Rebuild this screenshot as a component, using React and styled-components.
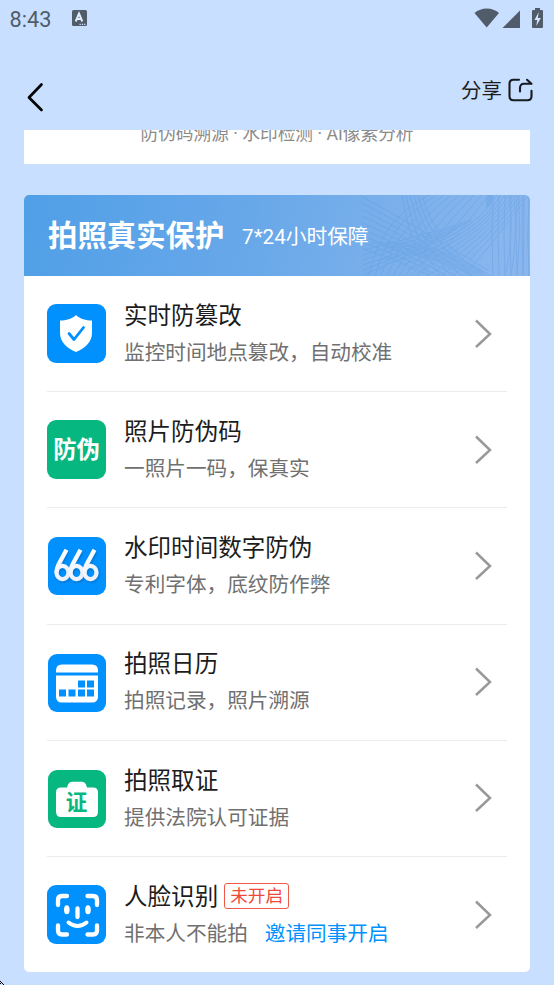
import React from 'react';
import styled, { createGlobalStyle } from 'styled-components';

const GlobalStyle = createGlobalStyle`
  * { box-sizing: border-box; }
  body { margin: 0; background: #c9dfff; }
`;

const Screen = styled.div`
  position: relative;
  display: flex;
  flex-direction: column;
  width: 554px;
  height: 985px;
  overflow: hidden;
  background: #c9dfff;
  font-family: Roboto, 'Noto Sans CJK SC', sans-serif;
  color: #1c1c1c;
  white-space: nowrap;
`;

const StatusBar = styled.header`
  display: flex;
  justify-content: space-between;
  height: 40px;
  flex: none;
  padding: 0 8px 0 9.5px;
`;

const StatusGroup = styled.div`
  display: flex;
  align-items: flex-start;
`;

const Clock = styled.span`
  width: 61.5px;
  padding-top: 7px;
  font-size: 21.7px;
  line-height: 26px;
  color: #505c69;
`;

const NavBar = styled.nav`
  display: flex;
  justify-content: space-between;
  height: 90px;
  flex: none;
  padding: 0 20px 0 24px;
`;

const PlainButton = styled.button`
  display: flex;
  align-items: center;
  height: 34px;
  margin-top: ${(p) => p.$top}px;
  padding: 0;
  border: 0;
  background: none;
  font: inherit;
  font-size: 20.5px;
  color: #1c1c1c;
  gap: 5px;
`;

const Content = styled.main`
  flex: 1;
  min-height: 0;
  padding: 0 24px;
  overflow: hidden;
`;

const Summary = styled.section`
  display: flex;
  justify-content: center;
  align-items: flex-end;
  height: 34px;
  margin-bottom: 31px;
  padding-bottom: 17px;
  overflow: hidden;
  background: #fff;
  font-size: 17.7px;
  line-height: 26px;
  color: #8b8b8b;
`;

const Card = styled.section`
  height: 777px;
  border-radius: 5px;
  overflow: hidden;
  background: #fff;
`;

const Banner = styled.div`
  position: relative;
  display: flex;
  align-items: center;
  height: 81px;
  padding: 1px 0 0 24px;
  background: linear-gradient(100deg, #509fe7 0%, #68a8e9 45%, #8ab6ed 95%);
  color: #fff;
`;

const BannerTitle = styled.h1`
  position: relative;
  margin: 0;
  width: 194px;
  font-size: 29.4px;
  line-height: 40px;
  font-weight: 700;
`;

const BannerNote = styled.span`
  position: relative;
  margin-top: 2px;
  font-size: 20.7px;
  line-height: 30px;
`;

const Pattern = styled.svg`
  position: absolute;
  right: 0;
  top: 0;
`;

const List = styled.ul`
  margin: 0;
  padding: 0 23px;
  list-style: none;
`;

const Row = styled.li`
  display: flex;
  height: 116.2px;
  padding: 28px 15px 0 0;
  border-bottom: 1px solid #ececec;
  &:last-child { border-bottom: 0; }
`;

const Tile = styled.div`
  display: flex;
  align-items: center;
  justify-content: center;
  flex: none;
  width: ${(p) => (p.$small ? 58 : 59)}px;
  height: ${(p) => (p.$small ? 58 : 59)}px;
  margin: ${(p) => (p.$small ? '1px 18px 0 1px' : '0 18px 0 0')};
  border-radius: 9px;
  background: ${(p) => p.$color};
  color: #fff;
  font-size: 23.3px;
  font-weight: 700;
  line-height: 59px;
`;

const TileLabel = styled.span`
  padding-top: 2px;
`;

const Copy = styled.div`
  flex: 1;
  margin-top: -7.2px;
`;

const Title = styled.h2`
  display: flex;
  align-items: center;
  height: 34px;
  margin: 0;
  font-size: 23.55px;
  font-weight: 400;
  gap: 6px;
`;

const Description = styled.p`
  display: flex;
  align-items: center;
  height: 30px;
  margin: 5px 0 0;
  font-size: 20.64px;
  color: #707070;
  gap: 17px;
`;

const Tag = styled.span`
  height: 26px;
  margin-top: 3px;
  padding: 0 5px;
  border: 1px solid #f0584b;
  border-radius: 3px;
  font-size: 17.6px;
  line-height: 24px;
  color: #f0483b;
`;

const Invite = styled.a`
  color: #0091ff;
`;

const Chevron = styled.svg`
  flex: none;
  margin-top: 14.7px;
`;

const CornerMark = styled.svg`
  position: absolute;
  left: 0;
  bottom: 0;
`;

const ShieldIcon = () => (
  <svg width="59" height="59" viewBox="0 0 59 59">
    <path d="M29 11C25 15 19 16.500 13 16.500V29C13 38 20 44.500 29 48C38 44.500 45 38 45 29V16.500C39 16.500 33 15 29 11Z" fill="#fff" />
    <path d="M22 29.500L27 35.500L36.500 23.500" fill="none" stroke="#0091ff" strokeWidth="2.800" strokeLinecap="round" strokeLinejoin="round" />
  </svg>
);

const SixesIcon = () => (
  <svg width="58" height="58" viewBox="0 0 58 58">
    <defs>
      <linearGradient id="six" gradientUnits="userSpaceOnUse" x1="6" x2="22" y1="13" y2="44">
        <stop offset="0" stopColor="#fff" />
        <stop offset="1" stopColor="#ebeffb" />
      </linearGradient>
      <filter id="sixShade" filterUnits="userSpaceOnUse" x="0" y="5" width="30" height="50">
        <feDropShadow dx="1" dy="1.5" stdDeviation="1.3" floodColor="#00457d" floodOpacity=".35" />
      </filter>
    </defs>
    {[0, 14, 28].map((x) => (
      <g key={x} transform={`translate(${x} 0)`} filter="url(#sixShade)" fill="none" stroke="url(#six)" strokeWidth="4.200">
        <ellipse cx="14.500" cy="35.500" rx="6" ry="6.600" />
        <path d="M18.500 12.700L10.500 27.500Q8.500 31.500 8.500 35.500" />
      </g>
    ))}
  </svg>
);

const CalendarIcon = () => (
  <svg width="58" height="58" viewBox="1 0.5 58 58">
    <path d="M9 19V17Q9 11 15 11H45Q51 11 51 17V19ZM9 22H51V43Q51 49 45 49H15Q9 49 9 43Z" fill="#fff" />
    <path d="M31 27h7v7h-7zM40 27h7v7h-7zM12 36h7v7h-7zM21.500 36h7v7h-7zM31 36h7v7h-7zM40 36h7v7h-7z" fill="#0091ff" />
  </svg>
);

const CaseIcon = () => (
  <svg width="58" height="58" viewBox="1 0.5 58 58">
    <path d="M20 18L21 15Q22 12.300 25 12.300H35Q38 12.300 39 15L40 18H46Q51 18 51 23V42Q51 47.500 46 47.500H14Q9 47.500 9 42V23Q9 18 14 18Z" fill="#fff" />
    <text x="29.500" y="40" textAnchor="middle" fontSize="21.500" fontWeight="700" fill="#07b780">证</text>
  </svg>
);

const FaceIcon = () => (
  <svg width="59" height="59" viewBox="0 0 59 59" fill="none" stroke="#fff" strokeWidth="4.300" strokeLinecap="round" strokeLinejoin="round">
    <path d="M20 11H15Q11 11 11 15V20M40.500 11H46Q50 11 50 15V20M11 40.500V45.500Q11 49.500 15 49.500H20M40.500 49.500H46Q50 49.500 50 45.500V40.500M30.500 23.500V32" />
    <path d="M21.500 37.500Q30.500 44.500 39.500 37.500" strokeWidth="4" />
    <ellipse cx="19.800" cy="24.800" rx="2.800" ry="4.500" fill="#fff" stroke="none" />
    <ellipse cx="41" cy="24.800" rx="2.800" ry="4.500" fill="#fff" stroke="none" />
  </svg>
);

const fan = (count, draw) => Array.from({ length: count }, (_, i) => draw(i)).join('');

const BannerPattern = () => (
  <Pattern width="167" height="81" viewBox="0 0 167 81" fill="none" stroke="#5598e0" strokeWidth="1">
    <g opacity=".32">
      <path d={fan(9, (i) => `M0 ${i * 6.5 + 2}Q${58 - i * 2} ${34 + i * 4} ${126 - i * 5} ${76 + i * 2}`)} />
      <path d={fan(6, (i) => `M${39 + i * 4} 0Q${46 + i * 5} 46 ${66 + i * 11} 81`)} />
      <path d={fan(9, (i) => `M${66 + i * 7.5} 0Q${16 + i * 9} ${26 + i * 3} ${6 + i * 6} 81`)} />
      <path d={fan(9, (i) => `M${134 + i * 4} 0Q${108 + i * 3} 45 ${14 + i * 10} ${66 + i * 3}`)} />
      <path d={fan(6, (i) => `M0 ${80 - i * 5}Q${34 + i * 5} ${66 - i * 5} ${84 + i * 5} ${40 - i * 3}`)} />
      <path d={fan(6, (i) => `M${8 + i * 6} ${48 + i * 2}Q${72 + i * 2} ${44 + i * 4} ${128 - i * 4} 81`)} />
      <path d={fan(7, (i) => `M${130 + i * 6} 0Q${128 + i * 6} 40 ${130 + i * 6} 81`)} />
      <path d={fan(5, (i) => `M${146 + i * 5} 0Q${152 + i * 3} 40 ${142 + i * 6} 81`)} />
      <path d="M124 0H131Q129 9 123 13Z" fill="#5598e0" stroke="none" />
    </g>
  </Pattern>
);

const items = [
  { title: '实时防篡改', text: '监控时间地点篡改，自动校准', color: '#0091ff', icon: <ShieldIcon /> },
  { title: '照片防伪码', text: '一照片一码，保真实', color: '#07b780', icon: <TileLabel>防伪</TileLabel> },
  { title: '水印时间数字防伪', text: '专利字体，底纹防作弊', color: '#0091ff', icon: <SixesIcon />, small: true },
  { title: '拍照日历', text: '拍照记录，照片溯源', color: '#0091ff', icon: <CalendarIcon />, small: true },
  { title: '拍照取证', text: '提供法院认可证据', color: '#07b780', icon: <CaseIcon />, small: true },
  { title: '人脸识别', text: '非本人不能拍', color: '#0091ff', icon: <FaceIcon />, tag: '未开启', link: '邀请同事开启' },
];

export default function App() {
  return (
    <Screen>
      <GlobalStyle />
      <StatusBar>
        <StatusGroup>
          <Clock>8:43</Clock>
          <svg width="17" height="28" viewBox="0 0 17 28">
            <rect x="1" y="10" width="15" height="16" rx="1.500" fill="#505c69" />
            <path d="M4.700 21.500L8 13.500L11.300 21.500M6 19H10" fill="none" stroke="#e0ecff" strokeWidth="2" />
            <path d="M8.500 24.300H15" stroke="#c9dfff" strokeWidth="1.200" strokeDasharray="1.300 1" />
          </svg>
        </StatusGroup>
        <StatusGroup>
          <svg width="73" height="32" viewBox="473 0 73 32">
            <path d="M474.500 13C481 7 492.500 7 499 13L486.700 27.500Z" fill="#505c69" />
            <path d="M520 10.500V28H502.500Z" fill="#505c69" />
            <path d="M535 8H540V10H542Q543 10 543 11V27Q543 28 542 28H533Q532 28 532 27V11Q532 10 533 10H535Z" fill="#505c69" />
            <path d="M538.800 12L534.500 20H537.200L536.300 26L540.800 18H537.800Z" fill="#d7e7ff" />
          </svg>
        </StatusGroup>
      </StatusBar>
      <NavBar>
        <PlainButton $top={40} aria-label="返回">
          <svg width="22" height="34" viewBox="0 0 22 34" fill="none" stroke="#050505" strokeWidth="2.700" strokeLinecap="round" strokeLinejoin="round">
            <path d="M17.500 4.500L5 17.500L17.500 30" />
          </svg>
        </PlainButton>
        <PlainButton $top={32}>
          分享
          <svg width="27" height="27" viewBox="0 0 27 27" fill="none" stroke="#161b22" strokeWidth="2.100" strokeLinecap="round" strokeLinejoin="round">
            <path d="M12 3.800H6.500Q2.500 3.800 2.500 7.800V20.300Q2.500 24.300 6.500 24.300H20.500Q24.500 24.300 24.500 20.300V14.800" />
            <path d="M13 15.500V12Q13 7.800 17 7.800H24M20 3.800L24.500 7.800" />
          </svg>
        </PlainButton>
      </NavBar>
      <Content>
        <Summary>防伪码溯源 · 水印检测 · AI像素分析</Summary>
        <Card>
          <Banner>
            <BannerPattern />
            <BannerTitle>拍照真实保护</BannerTitle>
            <BannerNote>7*24小时保障</BannerNote>
          </Banner>
          <List>
            {items.map((item) => (
              <Row key={item.title}>
                <Tile $color={item.color} $small={item.small}>{item.icon}</Tile>
                <Copy>
                  <Title>{item.title}{item.tag && <Tag>{item.tag}</Tag>}</Title>
                  <Description>{item.text}{item.link && <Invite>{item.link}</Invite>}</Description>
                </Copy>
                <Chevron width="18" height="30" viewBox="0 0 18 30" fill="none" stroke="#999" strokeWidth="2.500">
                  <path d="M2 1.500L16 15L2 28" />
                </Chevron>
              </Row>
            ))}
          </List>
        </Card>
      </Content>
      <CornerMark width="4" height="4" viewBox="0 0 4 4" fill="#000">
        <path d="M0 0h1v1H0zM1 1h1v1H1zM0 2h1v1H0zM2 2h1v1H2zM3 3h1v1H3z" />
      </CornerMark>
    </Screen>
  );
}
